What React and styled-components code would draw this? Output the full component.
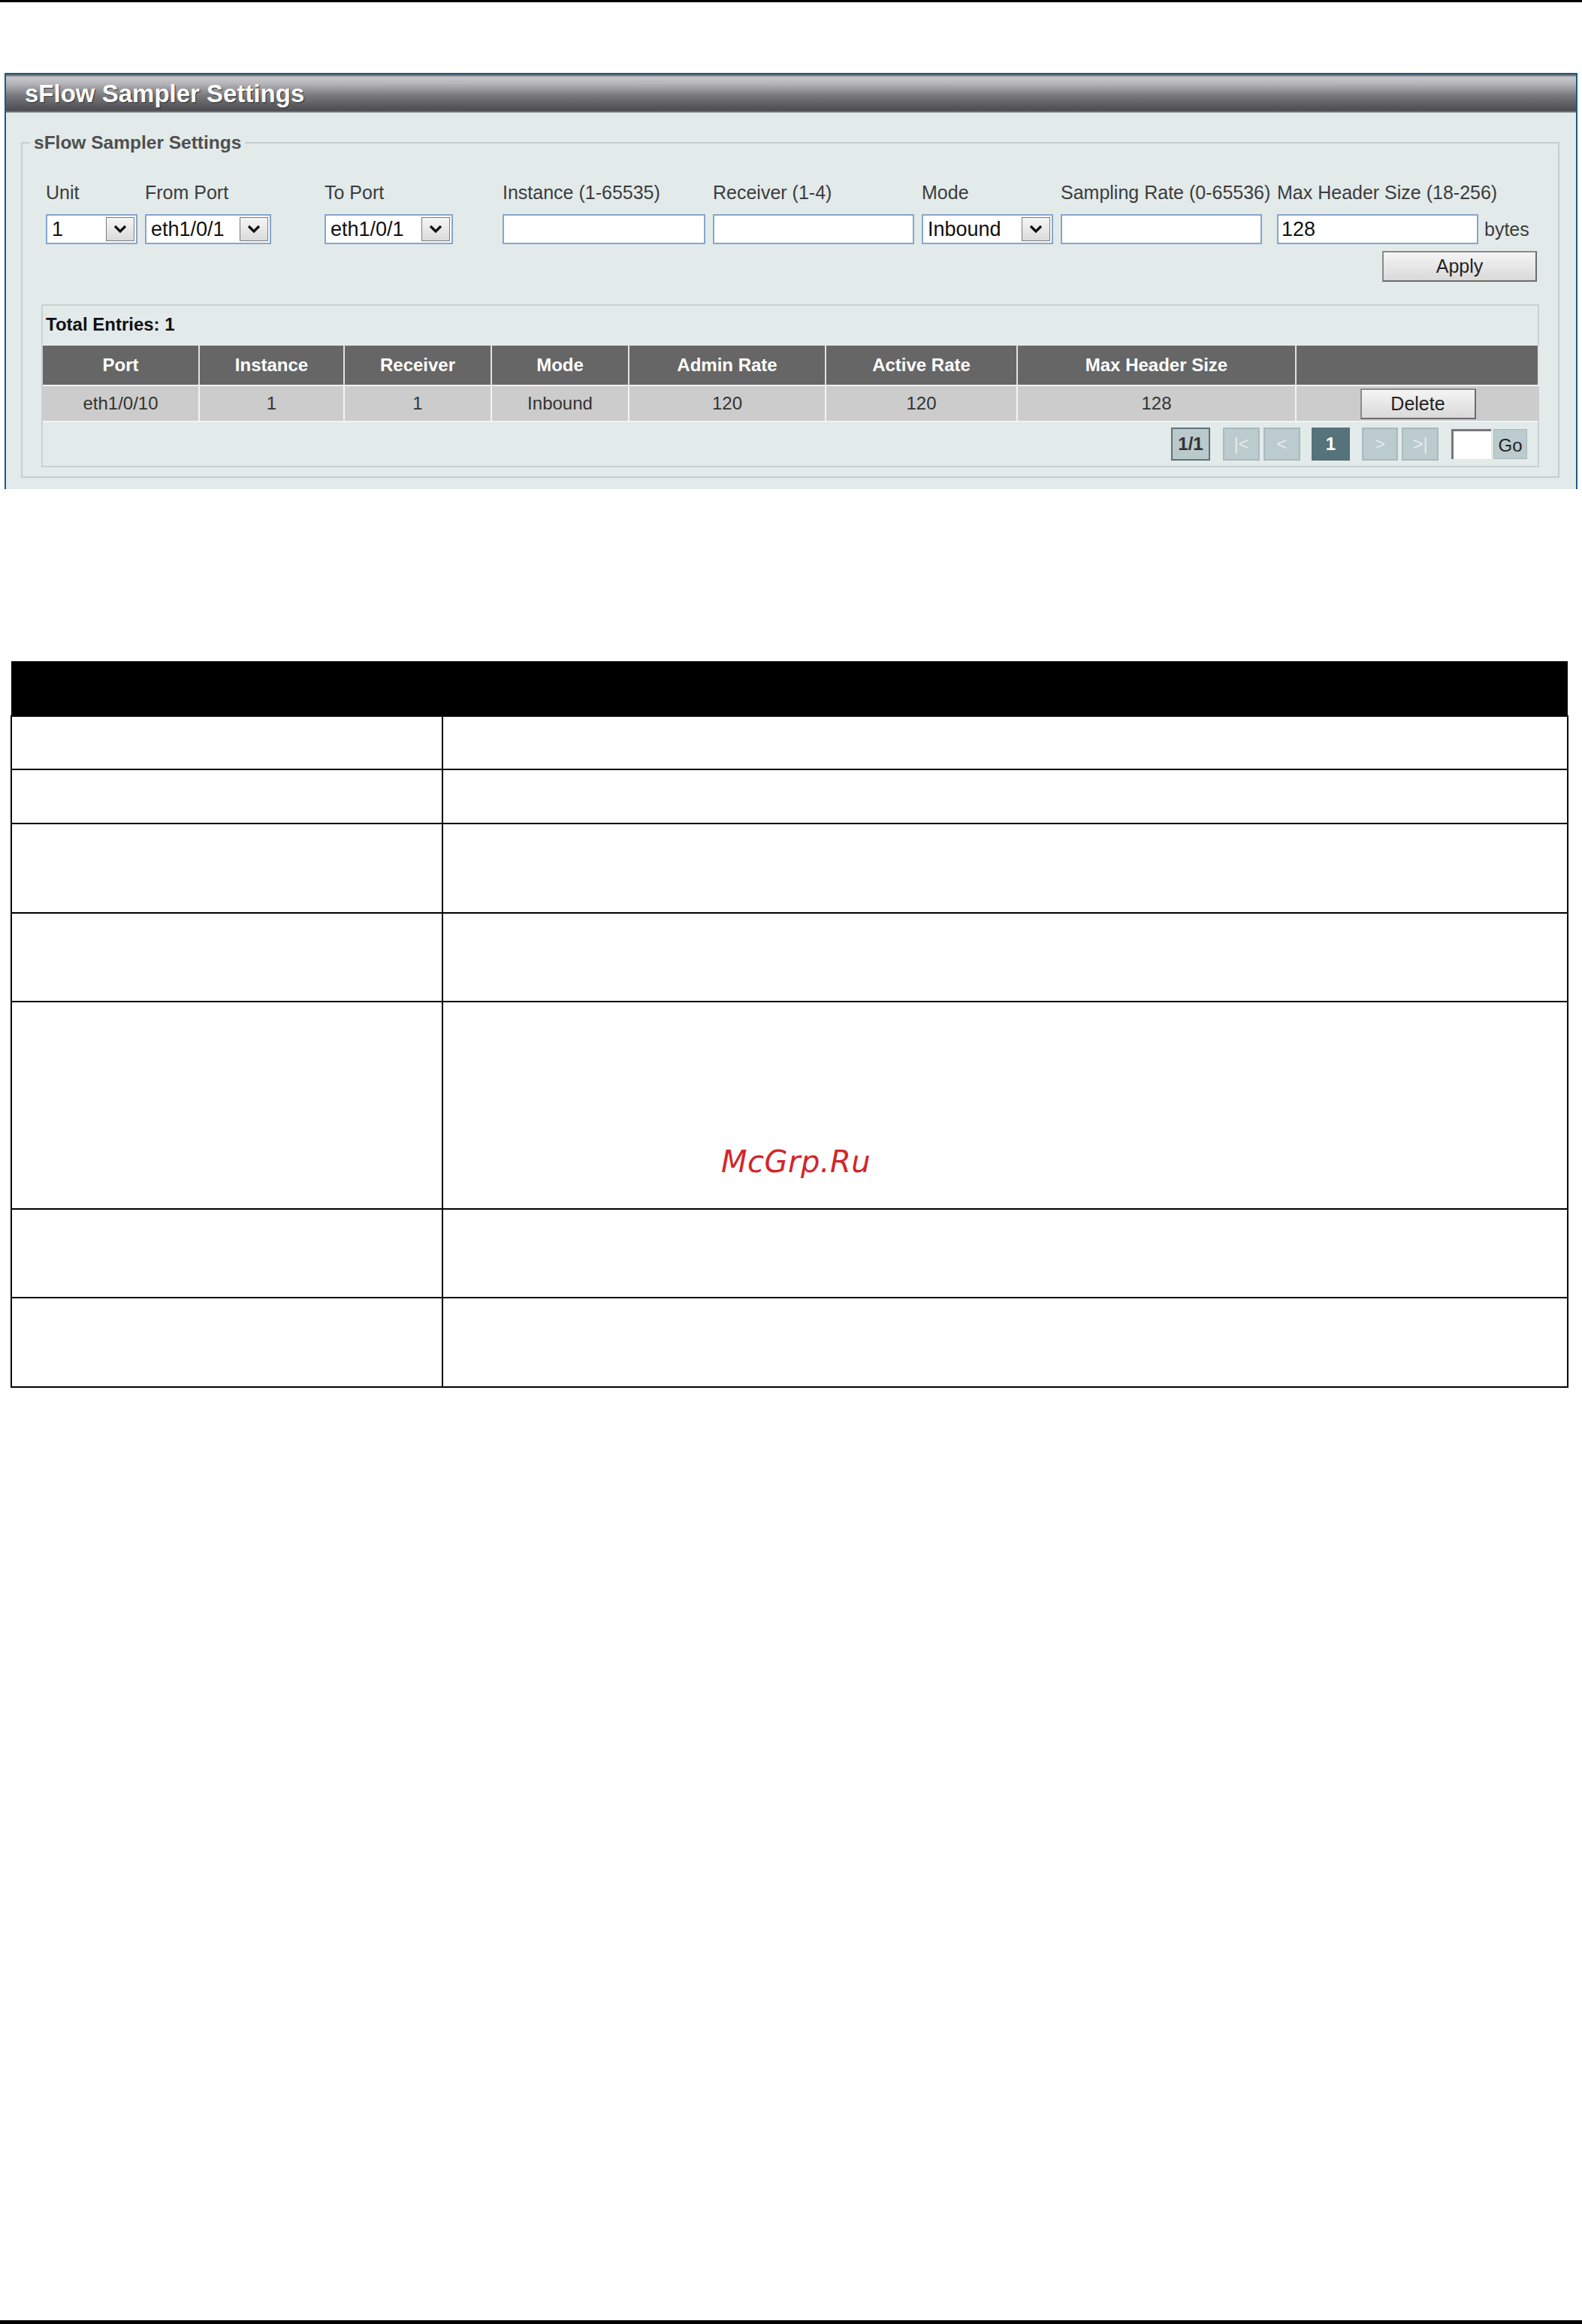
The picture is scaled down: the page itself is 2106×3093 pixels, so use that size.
import React from 'react';
import styled, { createGlobalStyle } from 'styled-components';

const GlobalStyle = createGlobalStyle`
  html, body {
    margin: 0;
    padding: 0;
    background: #fff;
  }
  body {
    font-family: "Liberation Sans", Arial, sans-serif;
  }
`;

const fields = [
  { label: "Unit", w: 132, kind: "select", value: "1", cw: 122 },
  { label: "From Port", w: 239, kind: "select", value: "eth1/0/1", cw: 168 },
  { label: "To Port", w: 237, kind: "select", value: "eth1/0/1", cw: 171 },
  { label: "Instance (1-65535)", w: 280, kind: "input", value: "", cw: 270 },
  { label: "Receiver (1-4)", w: 278, kind: "input", value: "", cw: 268 },
  { label: "Mode", w: 185, kind: "select", value: "Inbound", cw: 175 },
  { label: "Sampling Rate (0-65536)", w: 288, kind: "input", value: "", cw: 268 },
];

const columns = [
  { title: "Port", w: 209 },
  { title: "Instance", w: 193 },
  { title: "Receiver", w: 196 },
  { title: "Mode", w: 183 },
  { title: "Admin Rate", w: 262 },
  { title: "Active Rate", w: 255 },
  { title: "Max Header Size", w: 371 },
  { title: "", w: 323 },
];

const row = ["eth1/0/10", "1", "1", "Inbound", "120", "120", "128"];

const descRows = [
  { h: 69 },
  { h: 70 },
  { h: 117 },
  { h: 116 },
  { h: 274 },
  { h: 116, thin: true },
  { h: 117 },
];

const Page = styled.div`
  width: 2106px;
  height: 3093px;
  box-sizing: border-box;
  border-top: 3px solid #000;
  border-bottom: 5px solid #000;
  display: flex;
  flex-direction: column;
  background: #fff;
`;

const Panel = styled.section`
  margin: 94px 0 0 6px;
  width: 2094px;
  box-sizing: border-box;
  border: 2px solid #1d5b88;
  border-bottom: none;
`;

const PanelHeader = styled.div`
  height: 51px;
  display: flex;
  align-items: center;
  padding-left: 25px;
  background: linear-gradient(
    to bottom,
    #55555a 0px,
    #c9c9cd 4px,
    #b6b6ba 12px,
    #7a7a7e 28px,
    #555559 44px,
    #4f4f53 49px,
    #8c9494 50px,
    #8c9494 51px
  );
  color: #fff;
  font-size: 33px;
  font-weight: bold;
  text-shadow: 1px 1px 1px #2a2a2a;
`;

const PanelBody = styled.div`
  background: #e2eaea;
  padding: 26px 22px 15px 20px;
`;

const Fieldset = styled.fieldset`
  margin: 0;
  padding: 37px 25px 12px 25px;
  border: 2px solid #c3cfd0;
  min-width: 0;
`;

const Legend = styled.legend`
  margin-left: -15px;
  padding: 0 5px;
  font-size: 24.5px;
  line-height: 28px;
  font-weight: bold;
  color: #4f4f4f;
`;

const FormRow = styled.div`
  display: flex;
  align-items: flex-start;
  padding-left: 6px;
`;

const Field = styled.div`
  width: ${(p) => p.$w}px;
  flex-shrink: 0;
  display: flex;
  flex-direction: column;
  gap: 14px;
`;

const Label = styled.span`
  font-size: 25px;
  line-height: 30px;
  color: #3c3c3c;
  white-space: nowrap;
`;

const Select = styled.div`
  width: ${(p) => p.$w}px;
  height: 40px;
  box-sizing: border-box;
  border: 2px solid #86a6cc;
  background: #fff;
  display: flex;
  align-items: center;
  justify-content: space-between;
  padding: 0 2px 0 6px;
  font-size: 27px;
  color: #111;
`;

const ArrowBox = styled.span`
  width: 38px;
  height: 32px;
  box-sizing: border-box;
  border: 1px solid #7b7b7b;
  background: linear-gradient(#f6f6f6, #dadada);
  display: flex;
  align-items: center;
  justify-content: center;
`;

const TextInput = styled.input`
  width: ${(p) => p.$w}px;
  height: 40px;
  box-sizing: border-box;
  border: 2px solid #86a6cc;
  background: #fff;
  padding: 0 4px;
  margin: 0;
  font-family: "Liberation Sans", Arial, sans-serif;
  font-size: 27px;
  color: #111;
  outline: none;
`;

const InputWithUnit = styled.div`
  display: flex;
  align-items: center;
  gap: 8px;
`;

const Unit = styled.span`
  font-size: 25px;
  color: #3c3c3c;
`;

const ApplyRow = styled.div`
  display: flex;
  justify-content: flex-end;
  margin-top: 9px;
  padding-right: 3px;
`;

const Button = styled.button`
  width: ${(p) => p.$w}px;
  height: 41px;
  box-sizing: border-box;
  border: 2px solid #8a8a8a;
  border-right-color: #6c6c6c;
  border-bottom-color: #6c6c6c;
  background: linear-gradient(#f5f5f5, #d9d9d9);
  font-family: "Liberation Sans", Arial, sans-serif;
  font-size: 25px;
  color: #222;
  padding: 0;
  margin: 0;
`;

const EntriesBox = styled.div`
  margin-top: 30px;
  border: 2px solid #c8d2d3;
  padding-top: 11px;
`;

const Total = styled.div`
  font-size: 24px;
  line-height: 28px;
  font-weight: bold;
  color: #111;
  padding-left: 4px;
  margin-bottom: 14px;
`;

const Grid = styled.div`
  display: grid;
  grid-template-columns: ${(p) => p.$cols};
`;

const HeadCell = styled.div`
  height: 52px;
  background: #666;
  color: #fff;
  font-size: 24px;
  font-weight: bold;
  display: flex;
  align-items: center;
  justify-content: center;
  border-right: 2px solid #e2e2e2;
  &:last-child {
    border-right: none;
  }
`;

const DataCell = styled.div`
  height: 46px;
  background: #cccccc;
  color: #333;
  font-size: 24px;
  display: flex;
  align-items: center;
  justify-content: center;
  border-top: 2px solid #f0f0f0;
  border-right: 2px solid #f4f4f4;
  &:last-child {
    border-right: none;
  }
`;

const Pager = styled.div`
  height: 58px;
  border-top: 2px solid #f2f4f4;
  display: flex;
  align-items: center;
  justify-content: flex-end;
  padding-right: 14px;
`;

const PageBox = styled.span`
  width: ${(p) => p.$w}px;
  height: 44px;
  box-sizing: border-box;
  margin-left: ${(p) => p.$gap}px;
  display: flex;
  align-items: center;
  justify-content: center;
  font-size: 24px;
  font-weight: ${(p) => (p.$bold ? 'bold' : 'normal')};
  color: ${(p) => p.$color};
  background: ${(p) => p.$bg};
  border: 2px solid ${(p) => p.$border};
`;

const PageInput = styled.span`
  width: 53px;
  height: 40px;
  box-sizing: border-box;
  margin-left: 17px;
  background: #fff;
  border-top: 3px solid #777;
  border-left: 3px solid #777;
`;

const GoButton = styled.span`
  width: 45px;
  height: 40px;
  box-sizing: border-box;
  margin-left: 3px;
  display: flex;
  align-items: flex-end;
  justify-content: center;
  padding-bottom: 3px;
  background: #bccbce;
  border: 1px solid #a9b8bb;
  font-size: 24px;
  color: #222;
`;

const DescWrap = styled.div`
  position: relative;
  margin: 229px 0 0 14px;
  width: 2074px;
`;

const DescTable = styled.table`
  width: 100%;
  border-collapse: collapse;
  table-layout: fixed;
`;

const DescHead = styled.th`
  height: 72px;
  background: #000;
  padding: 0;
`;

const DescCell = styled.td`
  height: ${(p) => p.$h}px;
  padding: 0;
  border-top: ${(p) => (p.$thin ? 1 : 2)}px solid #000;
  border-bottom: 2px solid #000;
  border-left: 2px solid #000;
  border-right: 2px solid #000;
  & + & {
    border-left: 1px solid #000;
  }
`;

const Watermark = styled.span`
  position: absolute;
  left: 946px;
  top: 642px;
  font-family: "DejaVu Sans", sans-serif;
  font-style: italic;
  font-size: 40px;
  line-height: 48px;
  color: #d2262b;
  letter-spacing: 0.5px;
`;

const Chevron = () => (
  <svg width="20" height="16" viewBox="0 0 20 16">
    <polyline points="3,4 10,11 17,4" fill="none" stroke="#111" strokeWidth="3.2" />
  </svg>
);

const SelectBox = ({ w, value }) => (
  <Select $w={w}>
    <span>{value}</span>
    <ArrowBox>
      <Chevron />
    </ArrowBox>
  </Select>
);

const App = () => {
  const cols = columns.map((c) => c.w + 'px').join(' ');
  return (
    <>
      <GlobalStyle />
      <Page>
        <Panel>
          <PanelHeader>sFlow Sampler Settings</PanelHeader>
          <PanelBody>
            <Fieldset>
              <Legend>sFlow Sampler Settings</Legend>
              <FormRow>
                {fields.map((f) => (
                  <Field key={f.label} $w={f.w}>
                    <Label>{f.label}</Label>
                    {f.kind === 'select' ? (
                      <SelectBox w={f.cw} value={f.value} />
                    ) : (
                      <TextInput $w={f.cw} defaultValue={f.value} />
                    )}
                  </Field>
                ))}
                <Field $w={360}>
                  <Label>Max Header Size (18-256)</Label>
                  <InputWithUnit>
                    <TextInput $w={268} defaultValue="128" />
                    <Unit>bytes</Unit>
                  </InputWithUnit>
                </Field>
              </FormRow>
              <ApplyRow>
                <Button $w={206}>Apply</Button>
              </ApplyRow>
              <EntriesBox>
                <Total>Total Entries: 1</Total>
                <Grid $cols={cols}>
                  {columns.map((c, i) => (
                    <HeadCell key={i}>{c.title}</HeadCell>
                  ))}
                  {row.map((v, i) => (
                    <DataCell key={i}>{v}</DataCell>
                  ))}
                  <DataCell>
                    <Button $w={154}>Delete</Button>
                  </DataCell>
                </Grid>
                <Pager>
                  <PageBox $w={52} $gap={0} $bold $color="#333" $bg="#b9c9cc" $border="#5f7377">1/1</PageBox>
                  <PageBox $w={49} $gap={17} $color="#e4eaec" $bg="#bccbce" $border="#a9b9bc">|&lt;</PageBox>
                  <PageBox $w={49} $gap={5} $color="#e4eaec" $bg="#bccbce" $border="#a9b9bc">&lt;</PageBox>
                  <PageBox $w={51} $gap={15} $bold $color="#fff" $bg="#56727a" $border="#56727a">1</PageBox>
                  <PageBox $w={48} $gap={16} $color="#e4eaec" $bg="#bccbce" $border="#a9b9bc">&gt;</PageBox>
                  <PageBox $w={49} $gap={5} $color="#e4eaec" $bg="#bccbce" $border="#a9b9bc">&gt;|</PageBox>
                  <PageInput />
                  <GoButton>Go</GoButton>
                </Pager>
              </EntriesBox>
            </Fieldset>
          </PanelBody>
        </Panel>

        <DescWrap>
          <DescTable>
            <colgroup>
              <col style={{ width: '574px' }} />
              <col />
            </colgroup>
            <thead>
              <tr>
                <DescHead />
                <DescHead />
              </tr>
            </thead>
            <tbody>
              {descRows.map((r, i) => (
                <tr key={i}>
                  <DescCell $h={r.h} $thin={r.thin} />
                  <DescCell $h={r.h} $thin={r.thin} />
                </tr>
              ))}
            </tbody>
          </DescTable>
          <Watermark>McGrp.Ru</Watermark>
        </DescWrap>
      </Page>
    </>
  );
};

export default App;
